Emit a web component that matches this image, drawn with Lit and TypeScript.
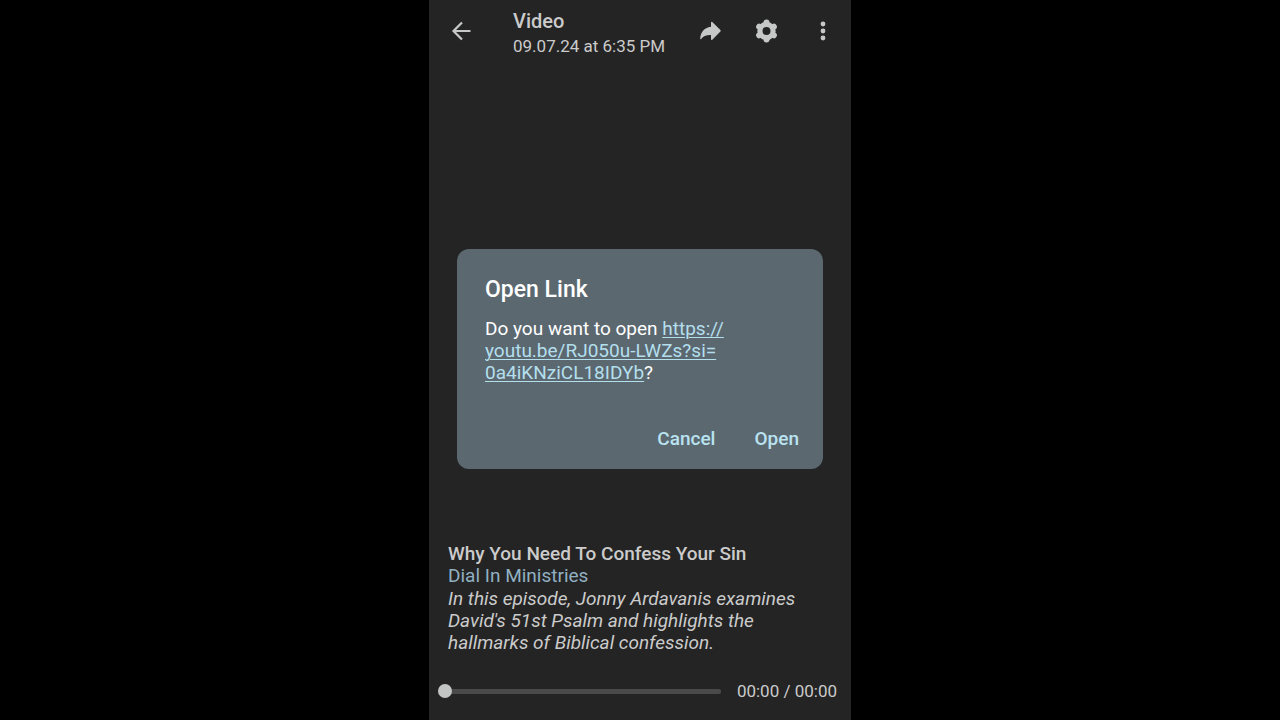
import { LitElement, html, css } from "lit";
import { customElement, state } from "lit/decorators.js";

@customElement("app-root")
export class AppRoot extends LitElement {
  static styles = css`
    :host {
      display: flex;
      justify-content: center;
      min-height: 100vh;
      background: #000;
      font-family: Roboto, sans-serif;
      color: #cbcbcb;
    }
    .screen {
      position: relative;
      display: flex;
      flex-direction: column;
      width: 100%;
      max-width: 422px;
      background: #242424;
    }
    .bar {
      display: flex;
      align-items: center;
      padding: 3px 14px 0 18px;
    }
    .titles {
      flex: 1;
      margin-left: 38px;
    }
    h1,
    h2,
    h3,
    p {
      margin: 0;
    }
    h1 {
      font-size: 20px;
      line-height: 24px;
      font-weight: 500;
      padding-top: 6px;
    }
    .date {
      font-size: 17px;
      line-height: 26px;
    }
    button {
      font: inherit;
      color: inherit;
      background: none;
      border: 0;
      padding: 0;
      cursor: pointer;
    }
    .icon {
      display: flex;
      justify-content: center;
      width: 28px;
    }
    .icon svg {
      width: 28px;
      height: 28px;
      fill: #c6c8c7;
    }
    .icon .line {
      fill: none;
      stroke: #c6c8c7;
      stroke-width: 2.2;
    }
    .icon .ring {
      fill: none;
      stroke: #c6c8c7;
      stroke-width: 5.2;
    }
    .icon .teeth {
      fill: none;
      stroke: #c6c8c7;
      stroke-width: 6;
      stroke-linecap: round;
    }
    .tools {
      display: flex;
      gap: 28px;
    }
    .stage {
      flex: 1;
    }
    .about {
      padding: 0 19px 26px;
      font-size: 19px;
      line-height: 22px;
    }
    h3 {
      font-size: 19px;
      font-weight: 500;
      line-height: 22px;
    }
    .about a {
      display: block;
      color: #91b0c2;
      text-decoration: none;
    }
    .summary {
      max-width: 350px;
      margin-top: 1px;
      font-style: italic;
    }
    .player {
      display: flex;
      align-items: center;
      gap: 16px;
      padding: 0 14px 18px 9px;
    }
    .seek {
      appearance: none;
      flex: 1;
      min-width: 0;
      height: 22px;
      margin: 0;
      background: transparent;
    }
    .seek::-webkit-slider-runnable-track {
      height: 5px;
      border-radius: 2px;
      background: #4a4a4a;
    }
    .seek::-webkit-slider-thumb {
      appearance: none;
      width: 14px;
      height: 14px;
      margin-top: -5px;
      border-radius: 50%;
      background: #c3c5c4;
    }
    .time {
      font-size: 17px;
      line-height: 22px;
    }
    .scrim {
      position: absolute;
      inset: 0;
      display: flex;
      align-items: center;
      justify-content: center;
      padding: 0 28px 2px;
    }
    .dialog {
      flex: 1;
      padding: 27px 24px 19px 28px;
      border-radius: 12px;
      background: #5c6870;
      color: #fff;
      font-size: 19px;
      line-height: 22px;
    }
    h2 {
      font-size: 23px;
      line-height: 28px;
      font-weight: 500;
    }
    .question {
      max-width: 260px;
      margin-top: 14px;
    }
    .question a {
      color: #b3dfed;
      text-decoration-thickness: 1px;
      text-underline-offset: 2px;
    }
    .actions {
      display: flex;
      justify-content: flex-end;
      gap: 39px;
      margin-top: 44px;
      font-weight: 500;
      color: #b9e3f0;
    }
  `;

  @state() private asking = true;

  private close = () => {
    this.asking = false;
  };

  render() {
    return html`
      <main class="screen">
        <header class="bar">
          <button class="icon" aria-label="Back">
            <svg viewBox="0 0 28 28">
              <path class="line" d="M23.5 14H6.5M15 5.5L6.5 14l8.5 8.5" />
            </svg>
          </button>
          <div class="titles">
            <h1>Video</h1>
            <p class="date">09.07.24 at 6:35 PM</p>
          </div>
          <div class="tools">
            <button class="icon" aria-label="Share">
              <svg viewBox="0 0 28 28">
                <path
                  d="M14 5.4c0-.7.8-1 1.3-.5l8.1 8.2c.5.5.5 1 0 1.500l-8.1 8.1c-.5.5-1.300.2-1.300-.5v-4.100C9.200 18 6 19.200 4.200 22c-.4.6-1.100.4-1-.4C3.600 15.500 6.800 10.600 14 9.700z"
                />
              </svg>
            </button>
            <button class="icon" aria-label="Settings">
              <svg viewBox="0 0 28 28">
                <circle class="ring" cx="13.5" cy="14" r="6.6" />
                <path
                  class="teeth"
                  d="M13.5 6.5V5.500M13.5 21.500v1M20 10.250l.87-.5M7 17.750l-.87.5M20 17.750l.87.5M7 10.250l-.87-.5"
                />
              </svg>
            </button>
            <button class="icon" aria-label="More options">
              <svg viewBox="0 0 28 28">
                <circle cx="14" cy="7" r="2.4" />
                <circle cx="14" cy="14" r="2.4" />
                <circle cx="14" cy="21" r="2.4" />
              </svg>
            </button>
          </div>
        </header>
        <div class="stage"></div>
        <section class="about">
          <h3>Why You Need To Confess Your Sin</h3>
          <a href="#ministry">Dial In Ministries</a>
          <p class="summary">
            In this episode, Jonny Ardavanis examines David's 51st Psalm and
            highlights the hallmarks of Biblical confession.
          </p>
        </section>
        <div class="player">
          <input
            class="seek"
            type="range"
            min="0"
            max="100"
            value="0"
            aria-label="Position"
          />
          <span class="time">00:00 / 00:00</span>
        </div>
        ${this.asking
          ? html`<div class="scrim">
              <section
                class="dialog"
                role="dialog"
                aria-labelledby="dialog-title"
              >
                <h2 id="dialog-title">Open Link</h2>
                <p class="question">
                  Do you want to open
                  <a href="https://youtu.be/RJ050u-LWZs?si=0a4iKNziCL18IDYb"
                    >https://<wbr />youtu.be/RJ050u-LWZs?si=<wbr />0a4iKNziCL18IDYb</a
                  >?
                </p>
                <div class="actions">
                  <button @click=${this.close}>Cancel</button>
                  <button @click=${this.close}>Open</button>
                </div>
              </section>
            </div>`
          : null}
      </main>
    `;
  }
}
